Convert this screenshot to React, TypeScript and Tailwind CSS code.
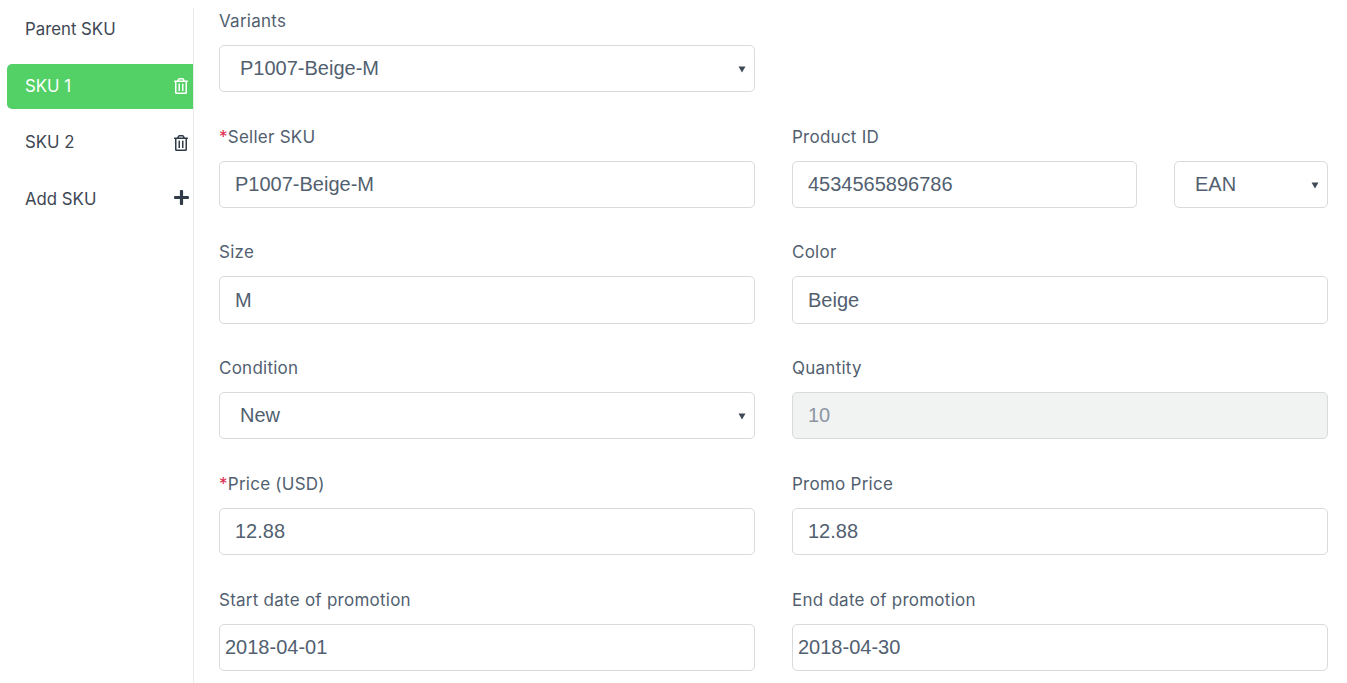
import React from 'react';
import { FaPlus, FaRegTrashAlt } from 'react-icons/fa';

const labelCls = "block h-[25px] pt-px mb-3 text-[17px] leading-6 tracking-[0.25px] text-[#525f70] font-['Inter',sans-serif]";
const fieldCls = "block w-full h-[47.4px] rounded-[5px] border border-[#d9dadb] text-[20px] font-['Liberation_Sans',Arial,sans-serif] outline-none";

const Caret = () => (
    <svg viewBox="0 0 8 8" className="absolute right-[9px] top-[20px] w-2 h-2 pointer-events-none">
        <path d="M0.5 1.5h7L4 7.5z" fill="#3f4a57" />
    </svg>
);

const Label = ({ text, required }: { text: string; required?: boolean }) => (
    <label className={labelCls}>
        {required && <span className="text-[#e0284a]">*</span>}
        {text}
    </label>
);

const TextField = ({ label, value, required, pad = 'px-[15px]' }: { label: string; value: string; required?: boolean; pad?: string }) => (
    <div>
        <Label text={label} required={required} />
        <input readOnly value={value} className={`${fieldCls} ${pad} bg-white text-[#525f70]`} />
    </div>
);

const SelectField = ({ label, value }: { label: string; value: string }) => (
    <div>
        <Label text={label} />
        <div className="relative">
            <select value={value} onChange={() => {}} className={`${fieldCls} pl-5 pb-[2px] appearance-none bg-white text-[#525f70]`}>
                <option>{value}</option>
            </select>
            <Caret />
        </div>
    </div>
);

const SideItem = ({ text, active, icon }: { text: string; active?: boolean; icon?: React.ReactNode }) => (
    <div className={`flex items-center justify-between h-[45px] pl-[18px] pr-1 rounded-l-[5px] text-[16.8px] ${active ? 'bg-[#54d166] text-white' : 'text-[#3e4753]'}`}>
        <span className="pt-px">{text}</span>
        {icon}
    </div>
);

const App = () => {
    return (
        <div className="flex h-[683px] overflow-hidden bg-white font-['Inter',sans-serif]">
            {/* Sidebar */}
            <aside className="w-[186px] ml-[7px] mt-2 shrink-0 border-r border-[#e8eaec] flex flex-col gap-[11.5px] box-content">
                <div className="-mt-px">
                    <SideItem text="Parent SKU" />
                </div>
                <SideItem text="SKU 1" active icon={<FaRegTrashAlt size={16} className="text-white" />} />
                <SideItem text="SKU 2" icon={<FaRegTrashAlt size={16} className="text-[#2f3b46]" />} />
                <SideItem text="Add SKU" icon={<FaPlus size={17} className="text-[#2f3b46] -mr-px -mt-[3px]" />} />
            </aside>

            {/* Form */}
            <main className="flex-1 pl-[25px] pr-[19px] pt-[7.9px]">
                <div className="grid grid-cols-2 gap-x-[37px] gap-y-[31.35px]">
                    <SelectField label="Variants" value="P1007-Beige-M" />
                    <div />

                    <TextField label="Seller SKU" value="P1007-Beige-M" required />
                    <div>
                        <Label text="Product ID" />
                        <div className="flex gap-[37px]">
                            <input readOnly value="4534565896786" className={`${fieldCls} px-[15px] flex-1 min-w-0 bg-white text-[#525f70]`} />
                            <div className="relative w-[154px] shrink-0">
                                <select value="EAN" onChange={() => {}} className={`${fieldCls} pl-5 appearance-none bg-white text-[#525f70]`}>
                                    <option>EAN</option>
                                </select>
                                <Caret />
                            </div>
                        </div>
                    </div>

                    <TextField label="Size" value="M" />
                    <TextField label="Color" value="Beige" />

                    <SelectField label="Condition" value="New" />
                    <div>
                        <Label text="Quantity" />
                        <input readOnly value="10" className={`${fieldCls} px-[15px] bg-[#f1f3f3] text-[#8c96a2]`} />
                    </div>

                    <TextField label="Price (USD)" value="12.88" required />
                    <TextField label="Promo Price" value="12.88" />

                    <TextField label="Start date of promotion" value="2018-04-01" pad="px-[5px]" />
                    <TextField label="End date of promotion" value="2018-04-30" pad="px-[5px]" />
                </div>
            </main>
        </div>
    );
};

export default App;
